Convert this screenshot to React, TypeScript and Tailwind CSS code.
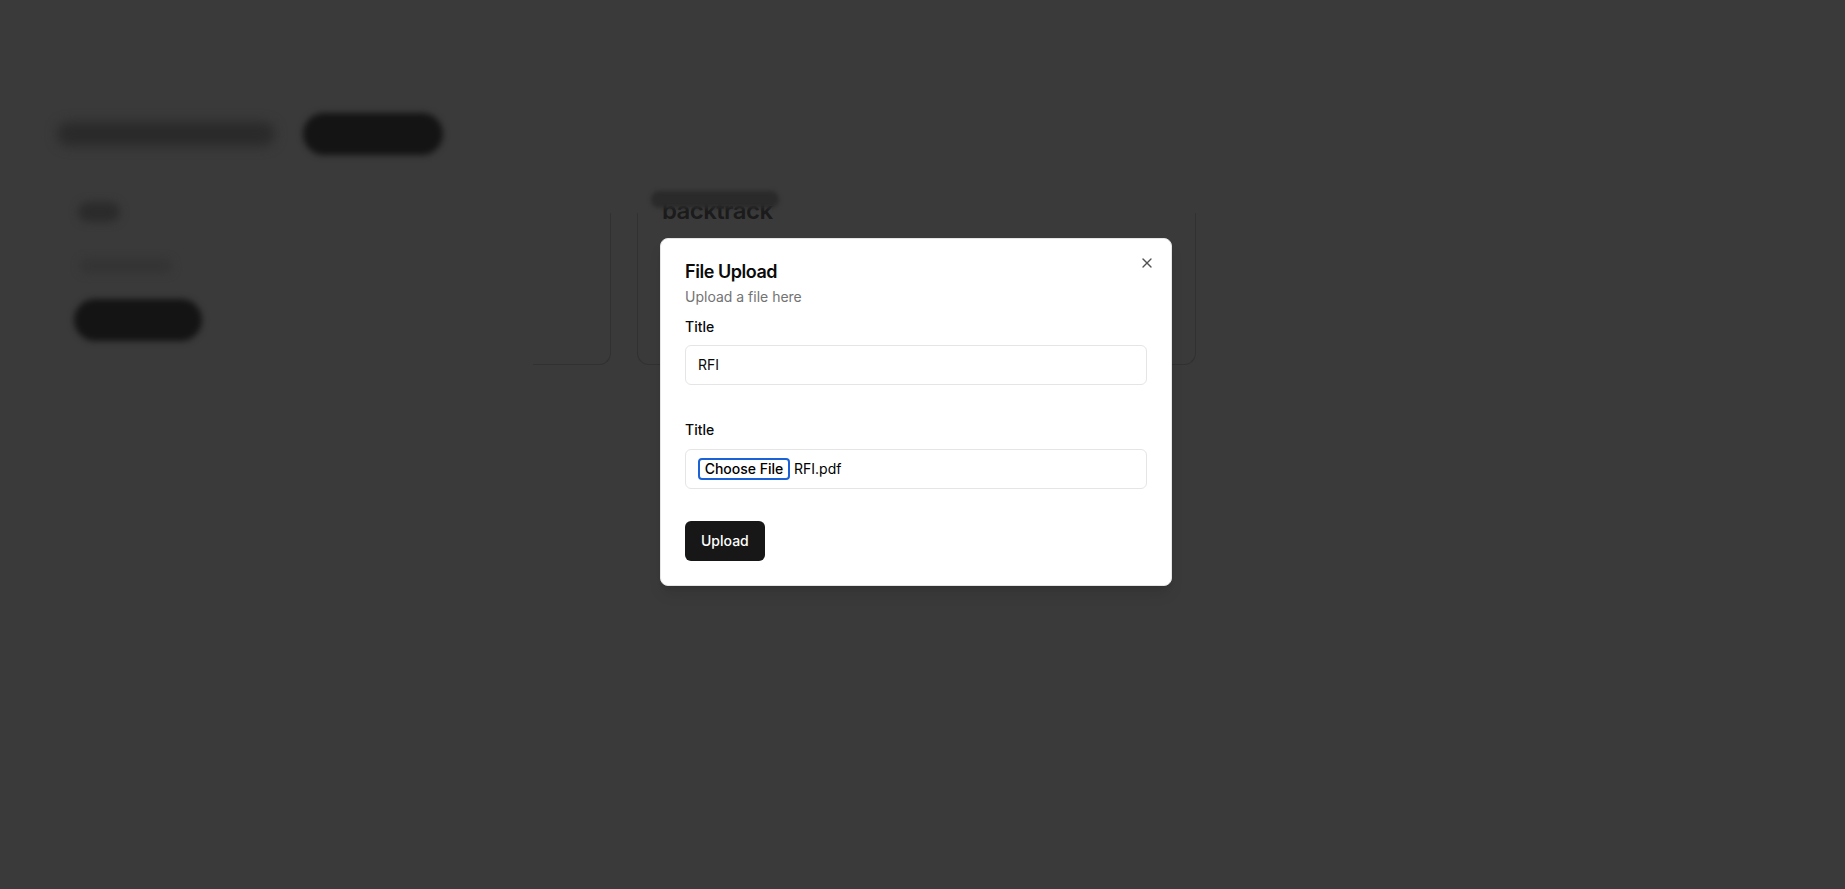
import React from "react";
import { X } from "lucide-react";

export default function App() {
  return (
    <div
      className="relative min-h-[889px] w-full overflow-hidden bg-[#3a3a3a]"
      style={{ fontFamily: "Inter, 'Noto Sans', sans-serif" }}
    >
      {/* dimmed, blurred page behind the dialog */}
      <div className="px-[53px] pt-[113px]">
        <div className="flex items-center">
          <div className="ml-[4px] h-[24px] w-[218px] rounded-full bg-[#2a2a2a] blur-[6px]" />
          <div className="ml-[28px] h-[42px] w-[140px] rounded-full bg-[#141414] blur-[3px]" />
        </div>

        <div className="mt-[21px] grid grid-cols-[558px_559px] gap-[26px]">
          {/* card 1 */}
          <div className="relative flex h-[189px] flex-col items-start px-6 pt-[26px]">
            <div className="pointer-events-none absolute bottom-0 left-[480px] right-0 top-[37px] rounded-br-xl border-b border-r border-[#313131]" />
            <div className="ml-[1px] h-[20px] w-[42px] rounded-full bg-[#2b2b2b] blur-[4px]" />
            <div className="ml-[3px] mt-[37px] h-[14px] w-[92px] rounded-full bg-[#343434] blur-[4px]" />
            <div className="-ml-[3px] mt-[26px] h-[42px] w-[128px] rounded-full bg-[#141414] blur-[3px]" />
          </div>

          {/* card 2 */}
          <div className="relative flex h-[189px] flex-col items-start px-6 pt-[23px]">
            <div className="pointer-events-none absolute inset-x-0 bottom-0 top-[37px] rounded-b-xl border-x border-b border-[#313131]" />
            <h3 className="ml-[1px] text-2xl font-semibold leading-none tracking-tight text-[#1b1b1b]">
              backtrack
            </h3>
            <div className="absolute left-[14px] top-[15px] z-10 h-[17px] w-[128px] rounded-full bg-[#2a2a2a] blur-[2px]" />
          </div>
        </div>
      </div>

      {/* dialog */}
      <div className="absolute left-[660px] top-[238px] z-20 w-[512px] rounded-lg border border-[#e5e5e5] bg-white p-6 shadow-lg">
        <button className="absolute right-4 top-4 text-[#0a0a0a] opacity-70">
          <X className="h-4 w-4" strokeWidth={2} />
        </button>
        <h2 className="text-lg font-semibold leading-none tracking-tight text-[#0a0a0a]">
          File Upload
        </h2>
        <p className="mt-1.5 text-sm leading-5 text-[#737373]">Upload a file here</p>

        <div className="mt-[10px] flex flex-col">
          <label className="block text-sm font-medium leading-5 text-[#0a0a0a]">Title</label>
          <div className="mt-2 flex h-10 w-full items-center rounded-md border border-[#e5e5e5] bg-white px-3 text-sm text-[#0a0a0a]">
            RFI
          </div>

          <label className="mt-[35px] block text-sm font-medium leading-5 text-[#0a0a0a]">Title</label>
          <div className="mt-[9px] flex h-10 w-full items-center rounded-md border border-[#e5e5e5] bg-white px-3 text-sm text-[#0a0a0a]">
            <span className="flex h-[22px] w-[92px] items-center justify-center rounded-[4px] border-2 border-[#1a62d6] text-sm font-medium leading-none text-black">
              Choose File
            </span>
            <span className="ml-1 text-sm text-black">RFI.pdf</span>
          </div>

          <div className="mt-8">
            <button className="inline-flex h-10 items-center justify-center rounded-md bg-[#171717] px-4 text-sm font-medium text-white">
              Upload
            </button>
          </div>
        </div>
      </div>
    </div>
  );
}
